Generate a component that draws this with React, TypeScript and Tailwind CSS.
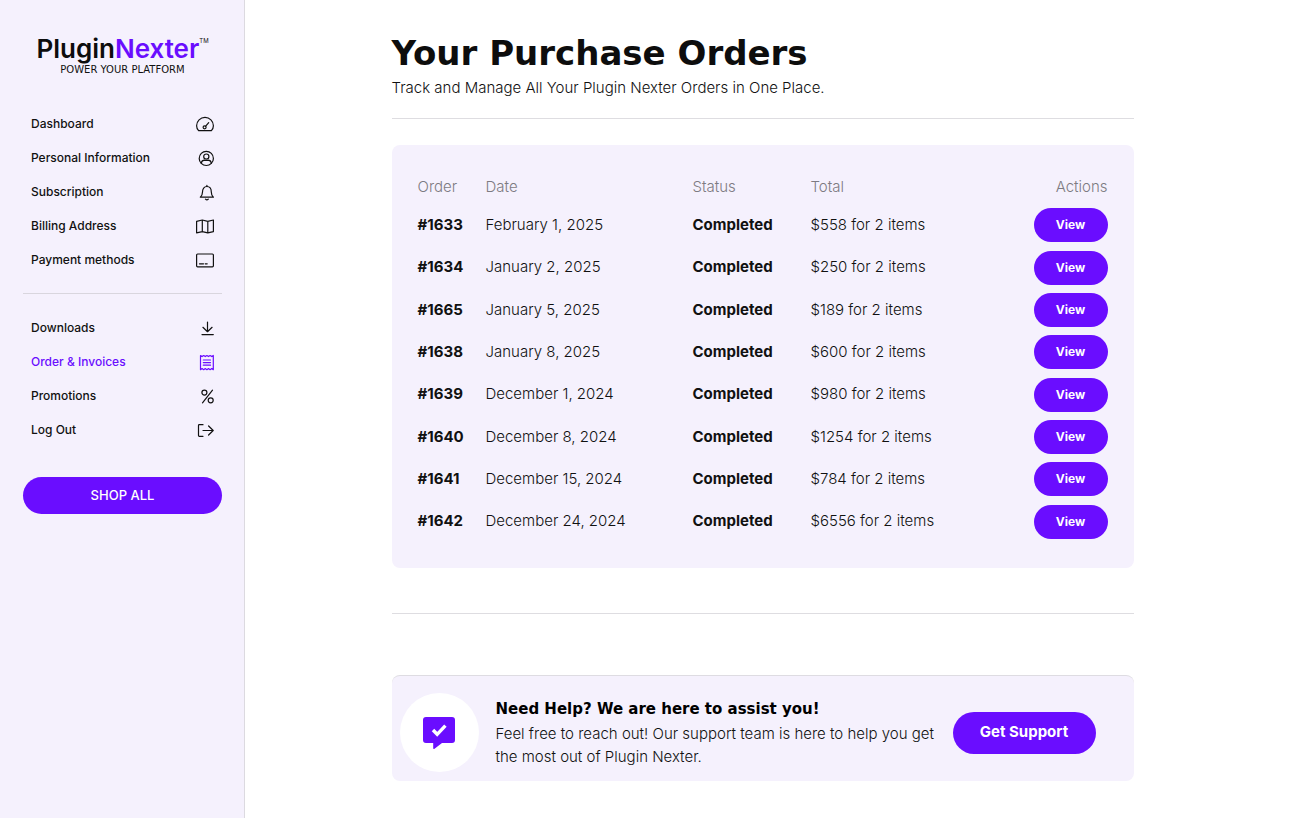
import type { ReactNode } from "react";

type NavItem = { label: string; icon: ReactNode; active?: boolean };

function Icon({ children }: { children: ReactNode }) {
    return (
        <svg
            className="size-[18px]"
            viewBox="0 0 18 18"
            fill="none"
            stroke="currentColor"
            strokeWidth="1.2"
            strokeLinecap="round"
            strokeLinejoin="round"
            aria-hidden="true"
        >
            {children}
        </svg>
    );
}

const accountLinks: NavItem[] = [
    {
        label: "Dashboard",
        icon: (
            <Icon>
                <path d="M2.6 15.6C1.3 14.3.6 12.6.6 10.8a8.4 8.4 0 0 1 16.8 0c0 1.8-.7 3.5-2 4.8Z" />
                <circle cx="8.6" cy="12.3" r="1.5" />
                <path d="m9.7 11.2 3-3.6" />
            </Icon>
        ),
    },
    {
        label: "Personal Information",
        icon: (
            <Icon>
                <circle cx="10.3" cy="9.4" r="7.1" />
                <circle cx="10.3" cy="7.6" r="2.6" />
                <path d="M5.2 14.2c.4-2 1.7-3 3.4-3 .6.4 2.8.4 3.4 0 1.7 0 3 1 3.4 3" />
            </Icon>
        ),
    },
    {
        label: "Subscription",
        icon: (
            <Icon>
                <path d="M4.3 14.2h13.1c-1.5-1.3-2.1-2.7-2.1-5.2 0-3.3-1.6-5.5-4.4-5.5S6.5 5.7 6.5 9c0 2.5-.7 3.9-2.2 5.2Z" />
                <path d="M10.9 3.5V2.3M9.5 16.2c.8.8 2 .8 2.8 0" />
            </Icon>
        ),
    },
    {
        label: "Billing Address",
        icon: (
            <Icon>
                <path d="M.6 4.3 6.3 3l5.5 1.3L17.4 3v11.6l-5.6 1.3-5.5-1.3L.6 15.9ZM6.3 3v11.6M11.8 4.3v11.6" />
            </Icon>
        ),
    },
    {
        label: "Payment methods",
        icon: (
            <Icon>
                <rect x=".6" y="3" width="16.8" height="12.8" rx="1" />
                <path d="M3.5 12.8h4M9.2 12.8h2" />
            </Icon>
        ),
    },
];

const orderLinks: NavItem[] = [
    {
        label: "Downloads",
        icon: (
            <Icon>
                <path d="M11.5 3v9.6M6.9 8.3l4.6 4.4 4.6-4.4M6 15.6h11.3" />
            </Icon>
        ),
    },
    {
        label: "Order & Invoices",
        active: true,
        icon: (
            <Icon>
                <path d="M4.5 2.5 6.1 3.6 7.7 2.5 9.3 3.6 10.9 2.5l1.6 1.1 1.6-1.1 1.6 1.1 1.6-1.1v14.2l-1.6-1.1-1.6 1.1-1.6-1.1-1.6 1.1-1.6-1.1-1.6 1.1-1.6-1.1-1.6 1.1Z" />
                <path d="M7.3 7h7.2M7.3 9.6h7.2M7.3 12.2h7.2" />
            </Icon>
        ),
    },
    {
        label: "Promotions",
        icon: (
            <Icon>
                <path d="M16.5 3.2 6.5 15.8" />
                <circle cx="8.4" cy="5.6" r="2.5" />
                <circle cx="14.7" cy="13.3" r="2.5" />
            </Icon>
        ),
    },
    {
        label: "Log Out",
        icon: (
            <Icon>
                <path d="M7 3.7H3.3c-.5 0-.8.3-.8.8v10c0 .5.3.8.8.8H7M7 9.5h10.2M12.6 5l4.6 4.5-4.6 4.5" />
            </Icon>
        ),
    },
];

const orders = [
    { id: "#1633", date: "February 1, 2025", total: "$558 for 2 items" },
    { id: "#1634", date: "January 2, 2025", total: "$250 for 2 items" },
    { id: "#1665", date: "January 5, 2025", total: "$189 for 2 items" },
    { id: "#1638", date: "January 8, 2025", total: "$600 for 2 items" },
    { id: "#1639", date: "December 1, 2024", total: "$980 for 2 items" },
    { id: "#1640", date: "December 8, 2024", total: "$1254 for 2 items" },
    { id: "#1641", date: "December 15, 2024", total: "$784 for 2 items" },
    { id: "#1642", date: "December 24, 2024", total: "$6556 for 2 items" },
];

function NavList({ items }: { items: NavItem[] }) {
    return (
        <ul>
            {items.map((item) => (
                <li key={item.label}>
                    <a
                        href="#"
                        className={
                            item.active
                                ? "flex h-[34px] items-center justify-between px-2 text-xs font-medium text-[#6a0dff]"
                                : "flex h-[34px] items-center justify-between px-2 text-xs font-medium text-[#111]"
                        }
                    >
                        {item.label}
                        {item.icon}
                    </a>
                </li>
            ))}
        </ul>
    );
}

function Sidebar() {
    return (
        <aside className="w-[245px] shrink-0 border-r border-[#dcdae0] bg-[#f5f1fd] pr-[22px] pl-[23px]">
            <div className="flex flex-col items-center pt-[33px]">
                <div className="flex items-start">
                    <span className="text-[26px] leading-8 font-semibold text-[#0d0d0d]">
                        Plugin<span className="text-[#6a0dff]">Nexter</span>
                    </span>
                    <span className="pt-[2px] text-[6px] leading-3">TM</span>
                </div>
                <span className="font-['DejaVu_Sans',sans-serif] text-[10px] leading-[10px]">POWER YOUR PLATFORM</span>
            </div>
            <nav className="pt-8">
                <NavList items={accountLinks} />
                <hr className="mt-4 mb-[17px] border-[#d9d6de]" />
                <NavList items={orderLinks} />
            </nav>
            <button type="button" className="mt-[30px] h-[37px] w-full rounded-full bg-[#6a0dff] text-[13px] font-medium text-white">
                SHOP ALL
            </button>
        </aside>
    );
}

function OrdersTable() {
    return (
        <section className="mt-[26px] rounded-lg bg-[#f5f1fd] px-[26px] pt-[26px] pb-[25px]">
            <table className="w-full table-fixed text-left text-[15px] font-light">
                <thead>
                    <tr className="h-[33px] text-[#7d7b82]">
                        <th className="w-[68px] font-light">Order</th>
                        <th className="w-[207px] font-light">Date</th>
                        <th className="w-[118px] font-light">Status</th>
                        <th className="font-light">Total</th>
                        <th className="w-[90px] text-right font-light">Actions</th>
                    </tr>
                </thead>
                <tbody>
                    {orders.map((order) => (
                        <tr key={order.id} className="h-[42px] nth-[3n+2]:h-[43px]">
                            <td className="font-bold">{order.id}</td>
                            <td>{order.date}</td>
                            <td className="font-bold">Completed</td>
                            <td>{order.total}</td>
                            <td>
                                <button type="button" className="ml-auto block h-[34px] w-[74px] rounded-full bg-[#6a0dff] text-xs font-bold text-white">
                                    View
                                </button>
                            </td>
                        </tr>
                    ))}
                </tbody>
            </table>
        </section>
    );
}

function SupportCard() {
    return (
        <section className="mt-[61px] flex min-h-[106px] items-center rounded-lg border-t border-[#dedce2] bg-[#f5f1fd] pr-[38px] pl-2">
            <div className="mt-2 flex size-[79px] shrink-0 items-center justify-center rounded-full bg-white">
                <svg className="size-[34px]" viewBox="0 0 34 34" aria-hidden="true">
                    <path d="M4 1h26a3 3 0 0 1 3 3v20a3 3 0 0 1-3 3H20l-7.5 5.8a.8.8 0 0 1-1.3-.7V27H4a3 3 0 0 1-3-3V4a3 3 0 0 1 3-3Z" fill="#6a0dff" />
                    <path d="m11 14 4.2 4.3 8.2-8.6" fill="none" stroke="#fff" strokeWidth="3.4" />
                </svg>
            </div>
            <div className="mt-2 ml-[17px] flex-1 pb-[2px]">
                <h2 className="font-['DejaVu_Sans',sans-serif] text-[15px] leading-[26px] font-bold text-black">Need Help? We are here to assist you!</h2>
                <p className="text-[15px] leading-[23px] font-light">
                    Feel free to reach out! Our support team is here to help you get the most out of Plugin Nexter.
                </p>
            </div>
            <button type="button" className="mt-2 ml-4 h-[42px] w-[143px] shrink-0 rounded-full bg-[#6a0dff] text-[15px] font-bold text-white">
                Get Support
            </button>
        </section>
    );
}

export default function App() {
    return (
        <div className="flex min-h-screen bg-white font-[Inter,sans-serif] text-[#111]">
            <Sidebar />
            <main className="flex-1 pr-5 pb-9">
                <div className="mx-auto max-w-[742px] pt-8">
                    <h1 className="font-['DejaVu_Sans',sans-serif] text-[34px] leading-[42px] font-bold text-[#0d0d0d]">Your Purchase Orders</h1>
                    <p className="mt-[2px] text-[15px] leading-6 font-light">Track and Manage All Your Plugin Nexter Orders in One Place.</p>
                    <hr className="mt-[18px] border-[#dedde1]" />
                    <OrdersTable />
                    <hr className="mt-[45px] border-[#dedde1]" />
                    <SupportCard />
                </div>
            </main>
        </div>
    );
}
